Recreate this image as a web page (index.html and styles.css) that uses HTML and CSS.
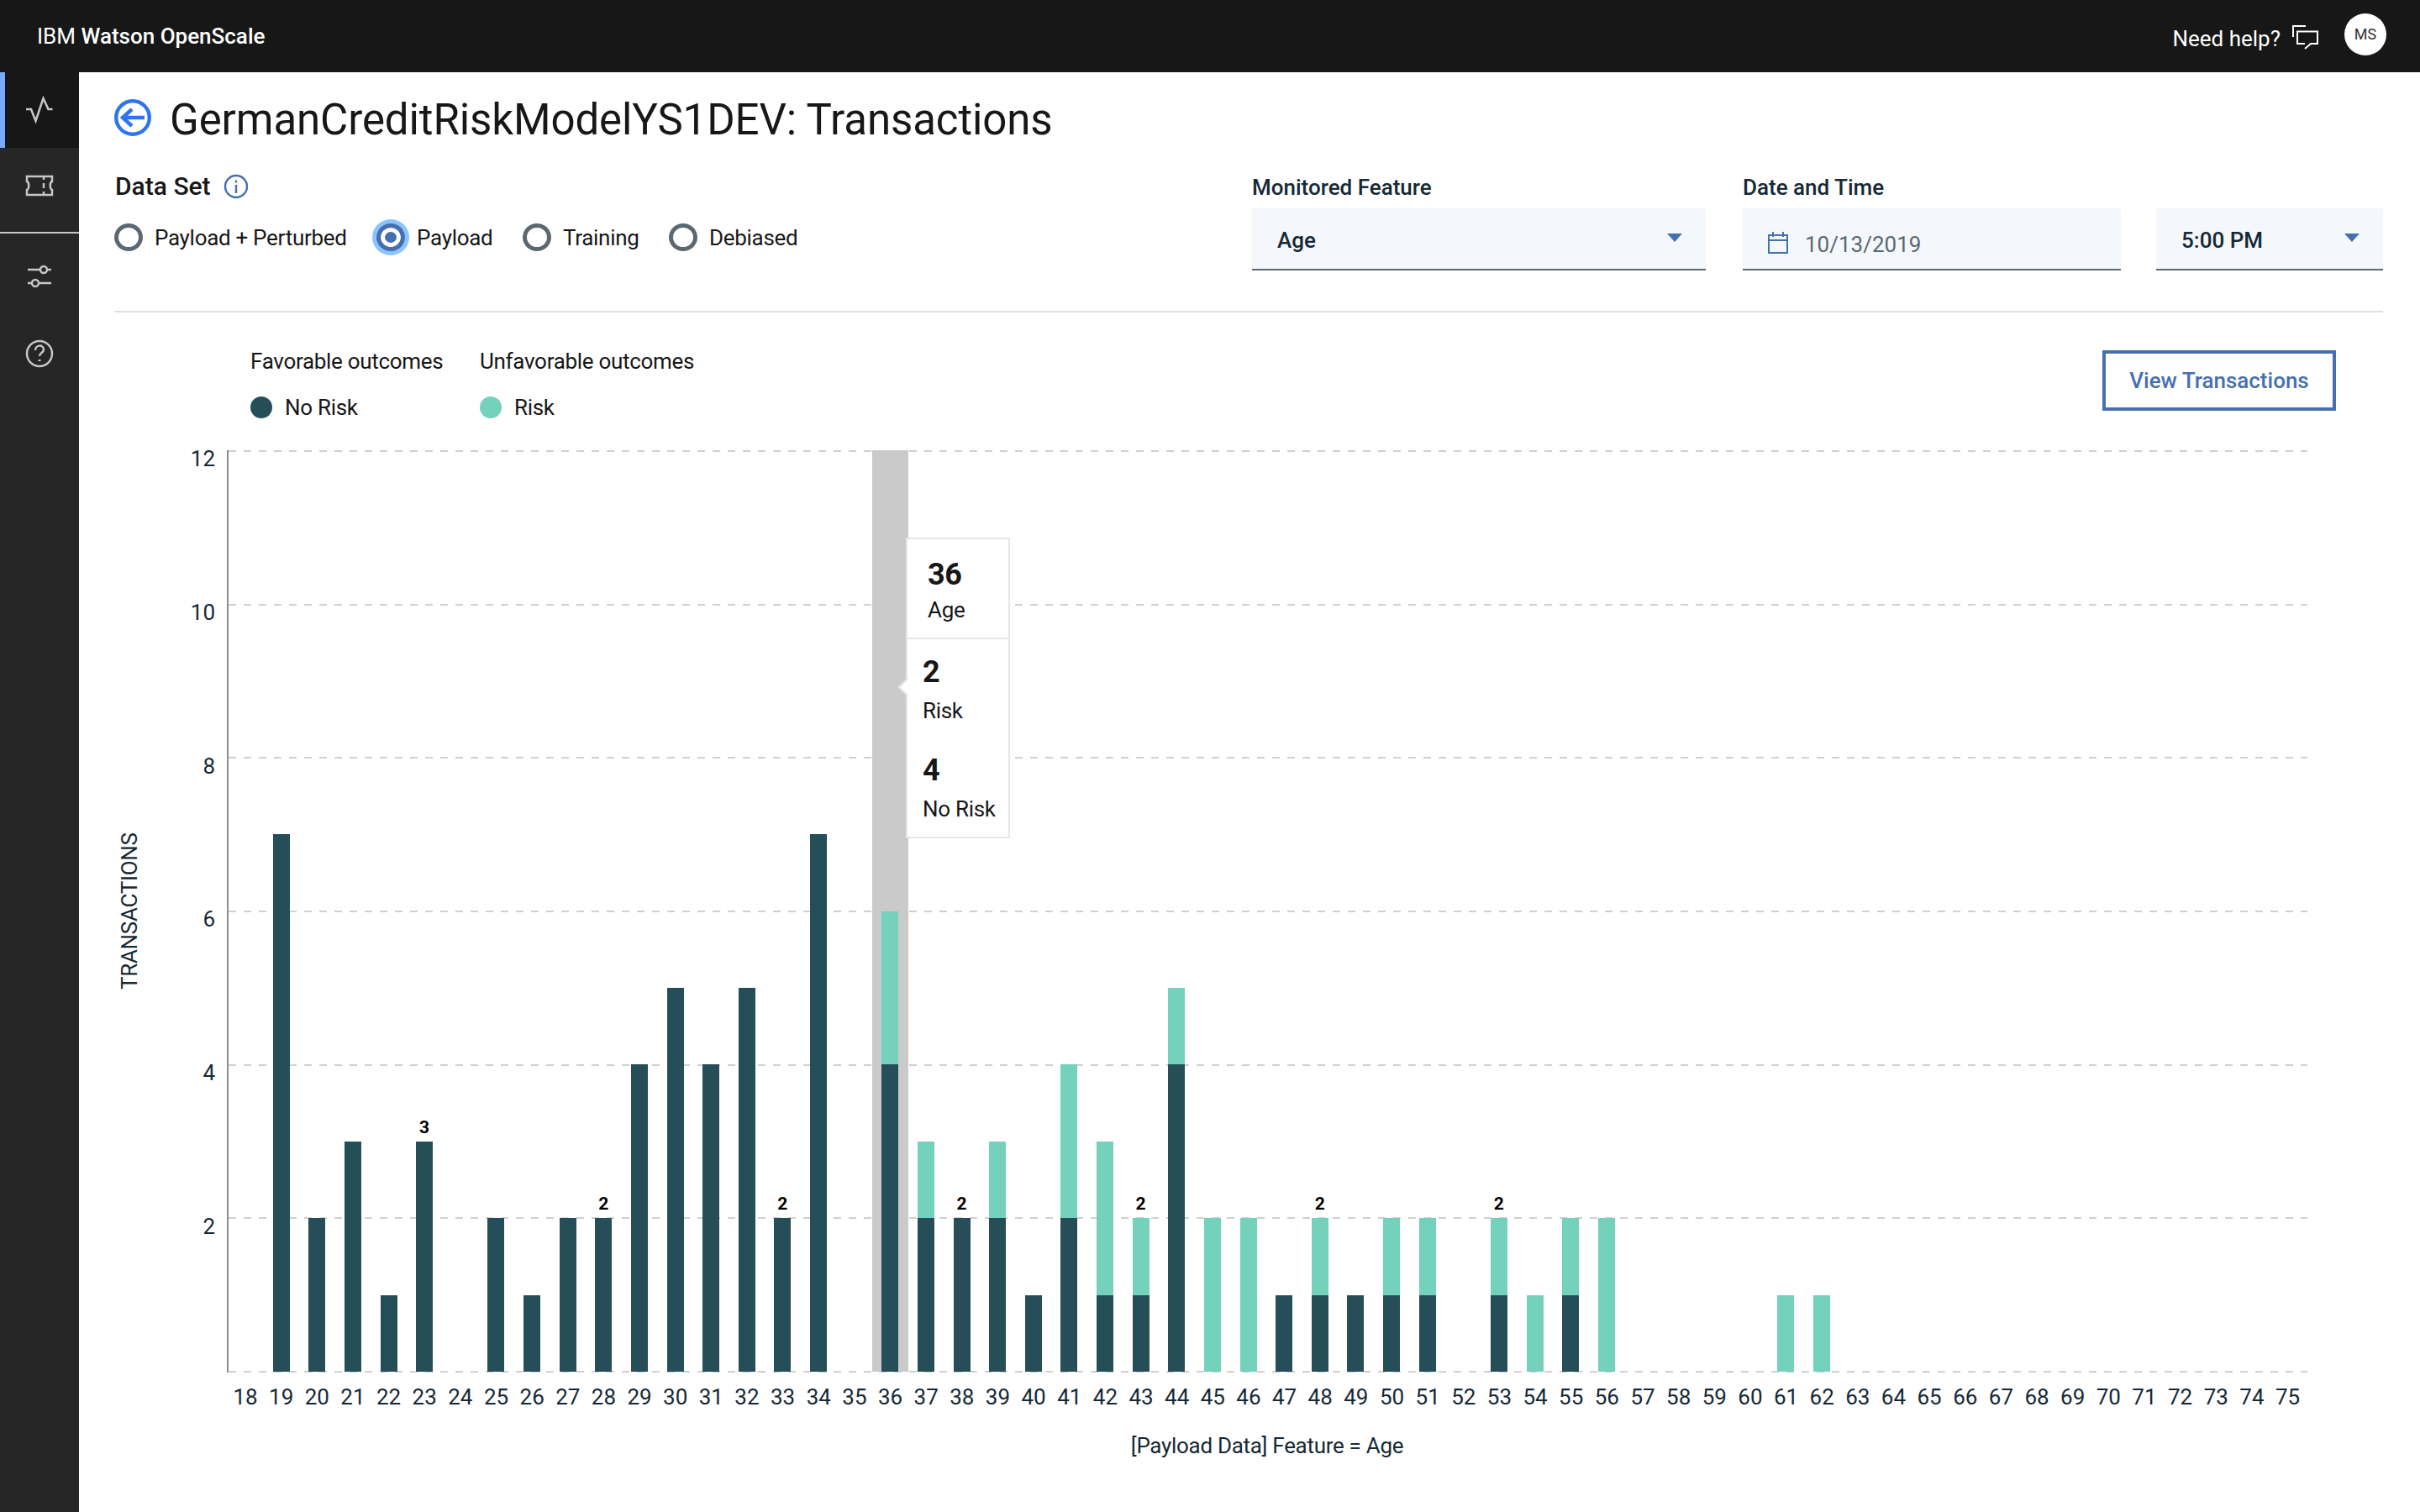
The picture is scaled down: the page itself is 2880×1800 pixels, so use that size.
FILE: index.html
```html
<!DOCTYPE html>
<html lang="en">
<head>
    <meta charset="UTF-8">
    <meta name="viewport" content="width=device-width, initial-scale=1.0">
    <title>IBM Watson OpenScale</title>
    <link rel="stylesheet" href="styles.css">
</head>
<body>
    <header class="topbar">
        <div class="brand">IBM <b>Watson OpenScale</b></div>
        <div class="help">
            <span class="help-text">Need help?</span>
            <svg class="help-icon" viewBox="0 0 32 30"><path d="M1 14V1h15M6 21V7.500h24V22h-8l-7 6"/><path d="M6 21v1h9"/></svg>
            <span class="avatar">MS</span>
        </div>
    </header>

    <div class="page">
        <nav class="sidenav">
            <a class="nav-item active"><svg viewBox="0 0 34 32"><path d="M1 15h6l5.500 14 9-27 6 13h5"/></svg></a>
            <a class="nav-item"><svg viewBox="0 0 34 32"><path d="M2 5h30v6c-3 1-3 9 0 10v6H2v-6c3-1 3-9 0-10z"/><path d="M22 5v4M22 13v6M22 23v4"/></svg></a>
            <hr class="nav-line">
            <a class="nav-item"><svg viewBox="0 0 34 32"><path d="M3 8h15M26 8h5M3 24h5M16 24h15"/><circle cx="22" cy="8" r="4"/><circle cx="12" cy="24" r="4"/></svg></a>
            <a class="nav-item"><svg viewBox="0 0 34 34"><circle cx="17" cy="17" r="15"/><path d="M12 13c0-7 10-7 10-1 0 4-5 4-5 8"/><path class="dot" d="M17 24v2"/></svg></a>
        </nav>

        <main class="content">
            <div class="title-row">
                <svg class="back" viewBox="0 0 44 44"><circle cx="22" cy="22" r="19.800"/><path d="M36 22H10M21 12L10 22l11 10"/></svg>
                <h1>GermanCreditRiskModelYS1DEV: Transactions</h1>
            </div>

            <div class="controls">
                <div class="dataset">
                    <div class="dataset-head">
                        <span>Data Set</span>
                        <svg class="info" viewBox="0 0 30 30"><circle cx="15" cy="15" r="13"/><path d="M15 13v10"/><path d="M15 7.500v3"/></svg>
                    </div>
                    <div class="radios">
                        <label class="radio"><i></i>Payload + Perturbed</label>
                        <label class="radio checked"><i></i>Payload</label>
                        <label class="radio"><i></i>Training</label>
                        <label class="radio"><i></i>Debiased</label>
                    </div>
                </div>
                <div class="filters">
                    <div class="field feature">
                        <div class="field-label">Monitored Feature</div>
                        <div class="select">Age<i class="caret"></i></div>
                    </div>
                    <div class="field date">
                        <div class="field-label">Date and Time</div>
                        <div class="select date-input">
                            <svg class="cal" viewBox="0 0 26 28"><path d="M2 5h22v21H2zM2 11h22M7 1v6M19 1v6"/></svg>
                            <span>10/13/2019</span>
                        </div>
                    </div>
                    <div class="field time">
                        <div class="select">5:00 PM<i class="caret"></i></div>
                    </div>
                </div>
            </div>

            <section class="chart-section">
                <div class="chart-head">
                    <div class="legend">
                        <div class="legend-group">
                            <div>Favorable outcomes</div>
                            <div class="legend-item"><i class="no-risk"></i>No Risk</div>
                        </div>
                        <div class="legend-group">
                            <div>Unfavorable outcomes</div>
                            <div class="legend-item"><i class="risk"></i>Risk</div>
                        </div>
                    </div>
                    <button class="view-btn">View Transactions</button>
                </div>

                <div class="chart-row">
                    <div class="y-title">TRANSACTIONS</div>
                    <div class="y-ticks">
                        <span>12</span><span>10</span><span>8</span><span>6</span><span>4</span><span>2</span>
                    </div>
                    <div class="plot">
                        <div class="gridlines">
                            <i></i><i></i><i></i><i></i><i></i><i></i><i></i>
                        </div>
                        <div class="cols">
                            <div class="col"></div>
                            <div class="col"><u class="bar no-risk v7"></u></div>
                            <div class="col"><u class="bar no-risk v2"></u></div>
                            <div class="col"><u class="bar no-risk v3"></u></div>
                            <div class="col"><u class="bar no-risk v1"></u></div>
                            <div class="col"><b class="total">3</b><u class="bar no-risk v3"></u></div>
                            <div class="col"></div>
                            <div class="col"><u class="bar no-risk v2"></u></div>
                            <div class="col"><u class="bar no-risk v1"></u></div>
                            <div class="col"><u class="bar no-risk v2"></u></div>
                            <div class="col"><b class="total">2</b><u class="bar no-risk v2"></u></div>
                            <div class="col"><u class="bar no-risk v4"></u></div>
                            <div class="col"><u class="bar no-risk v5"></u></div>
                            <div class="col"><u class="bar no-risk v4"></u></div>
                            <div class="col"><u class="bar no-risk v5"></u></div>
                            <div class="col"><b class="total">2</b><u class="bar no-risk v2"></u></div>
                            <div class="col"><u class="bar no-risk v7"></u></div>
                            <div class="col"></div>
                            <div class="col hover"><u class="bar risk v2"></u><u class="bar no-risk v4"></u></div>
                            <div class="col"><u class="bar risk v1"></u><u class="bar no-risk v2"></u></div>
                            <div class="col"><b class="total">2</b><u class="bar no-risk v2"></u></div>
                            <div class="col"><u class="bar risk v1"></u><u class="bar no-risk v2"></u></div>
                            <div class="col"><u class="bar no-risk v1"></u></div>
                            <div class="col"><u class="bar risk v2"></u><u class="bar no-risk v2"></u></div>
                            <div class="col"><u class="bar risk v2"></u><u class="bar no-risk v1"></u></div>
                            <div class="col"><b class="total">2</b><u class="bar risk v1"></u><u class="bar no-risk v1"></u></div>
                            <div class="col"><u class="bar risk v1"></u><u class="bar no-risk v4"></u></div>
                            <div class="col"><u class="bar risk v2"></u></div>
                            <div class="col"><u class="bar risk v2"></u></div>
                            <div class="col"><u class="bar no-risk v1"></u></div>
                            <div class="col"><b class="total">2</b><u class="bar risk v1"></u><u class="bar no-risk v1"></u></div>
                            <div class="col"><u class="bar no-risk v1"></u></div>
                            <div class="col"><u class="bar risk v1"></u><u class="bar no-risk v1"></u></div>
                            <div class="col"><u class="bar risk v1"></u><u class="bar no-risk v1"></u></div>
                            <div class="col"></div>
                            <div class="col"><b class="total">2</b><u class="bar risk v1"></u><u class="bar no-risk v1"></u></div>
                            <div class="col"><u class="bar risk v1"></u></div>
                            <div class="col"><u class="bar risk v1"></u><u class="bar no-risk v1"></u></div>
                            <div class="col"><u class="bar risk v2"></u></div>
                            <div class="col"></div><div class="col"></div><div class="col"></div><div class="col"></div>
                            <div class="col"><u class="bar risk v1"></u></div>
                            <div class="col"><u class="bar risk v1"></u></div>
                        </div>
                        <div class="tooltip">
                            <div class="tip-head"><strong>36</strong><span>Age</span></div>
                            <div class="tip-body">
                                <strong>2</strong><span>Risk</span>
                                <strong class="tip-second">4</strong><span>No Risk</span>
                            </div>
                        </div>
                    </div>
                </div>

                <div class="x-ticks">
                    <span>18</span><span>19</span><span>20</span><span>21</span><span>22</span><span>23</span><span>24</span><span>25</span><span>26</span><span>27</span>
                    <span>28</span><span>29</span><span>30</span><span>31</span><span>32</span><span>33</span><span>34</span><span>35</span><span>36</span><span>37</span>
                    <span>38</span><span>39</span><span>40</span><span>41</span><span>42</span><span>43</span><span>44</span><span>45</span><span>46</span><span>47</span>
                    <span>48</span><span>49</span><span>50</span><span>51</span><span>52</span><span>53</span><span>54</span><span>55</span><span>56</span><span>57</span>
                    <span>58</span><span>59</span><span>60</span><span>61</span><span>62</span><span>63</span><span>64</span><span>65</span><span>66</span><span>67</span>
                    <span>68</span><span>69</span><span>70</span><span>71</span><span>72</span><span>73</span><span>74</span><span>75</span>
                </div>
                <div class="x-title">[Payload Data] Feature = Age</div>
            </section>
        </main>
    </div>
</body>
</html>
```

FILE: styles.css
```css
*{
    box-sizing: border-box;
}
html, body{
    margin: 0;
    height: 100%;
}
body{
    font-family: Roboto, "Noto Sans", sans-serif;
    font-size: 26px;
    line-height: 30px;
    color: #171717;
    background: #fff;
    overflow: hidden;
}

/* top bar */
.topbar{
    height: 86px;
    background: #171717;
    color: #fff;
    display: flex;
    align-items: center;
    justify-content: space-between;
    padding: 0 40px 0 44px;
}
.brand{
    font-size: 26px;
    margin-top: -1px;
}
.brand b{
    font-weight: 500;
}
.help{
    display: flex;
    align-items: center;
}
.help-text{
    margin-top: 6px;
}
.help-icon{
    width: 32px;
    height: 30px;
    margin-top: 3px;
    margin-left: 14px;
    margin-right: 30px;
    fill: none;
    stroke: #fff;
    stroke-width: 2;
}
.avatar{
    width: 50px;
    height: 50px;
    border-radius: 50%;
    background: #fff;
    color: #333;
    font-size: 18px;
    text-align: center;
    line-height: 50px;
    margin-top: -4px;
}

.page{
    display: flex;
    height: 1714px;
}

/* left nav */
.sidenav{
    width: 94px;
    background: #262626;
    flex: none;
}
.nav-item{
    display: flex;
    align-items: center;
    justify-content: center;
    height: 90px;
}
.nav-item.active{
    background: #171717;
    border-left: 6px solid #78a9ff;
    padding-right: 6px;
}
.nav-item svg{
    width: 34px;
    height: 34px;
    fill: none;
    stroke: #c6c6c6;
    stroke-width: 2.500;
}
.nav-item .dot{
    stroke-width: 3;
}
.nav-line{
    border: 0;
    height: 2px;
    background: #c6c6c6;
    margin: 10px 0 6px;
}
.nav-line + .nav-item{
    margin-bottom: 2px;
}

/* main */
.content{
    flex: 1;
    padding: 32px 44px 0 42px;
}
.title-row{
    display: flex;
    align-items: center;
    height: 44px;
}
.back{
    width: 44px;
    height: 44px;
    margin-right: 22px;
    fill: none;
    stroke: #2f74ee;
    stroke-width: 4.400;
}
h1{
    margin: 0;
    padding-top: 6px;
    font-size: 51px;
    line-height: 60px;
    font-weight: 400;
    letter-spacing: -0.100px;
}

.controls{
    display: flex;
    justify-content: space-between;
    margin-top: 46px;
    padding-bottom: 48px;
    border-bottom: 2px solid #e0e0e0;
}
.dataset-head{
    display: flex;
    align-items: center;
    font-size: 30px;
    font-weight: 500;
    margin-top: -1px;
    padding-left: 1px;
}
.info{
    width: 30px;
    height: 30px;
    margin-left: 15px;
    fill: none;
    stroke: #466fb0;
    stroke-width: 2.400;
}
.radios{
    display: flex;
    gap: 35.500px;
    margin-top: 29px;
    letter-spacing: -0.300px;
}
.radio{
    display: flex;
    align-items: center;
    gap: 14px;
}
.radio i{
    width: 34px;
    height: 33px;
    border: 5px solid #5a6872;
    border-radius: 50%;
}
.radio.checked i{
    border-color: #466fb0;
    background: #466fb0;
    box-shadow: inset 0 0 0 5px #fff, 0 0 0 5px #8cc4ff;
}

.filters{
    display: flex;
}
.field-label{
    font-weight: 500;
    color: #152935;
    height: 30px;
    margin-bottom: 10px;
}
.select{
    height: 74px;
    background: #f4f7fb;
    border-bottom: 2px solid #5a6872;
    display: flex;
    align-items: center;
    justify-content: space-between;
    padding: 4px 28px 0 30px;
    font-weight: 500;
    color: #152935;
}
.feature{
    width: 540px;
    margin-right: 44px;
}
.date{
    width: 450px;
    margin-right: 42px;
}
.time{
    width: 270px;
    padding-top: 40px;
}
.time .select{
    padding-left: 30px;
}
.date-input{
    justify-content: flex-start;
    padding: 14px 0 0 29px;
    font-weight: 400;
    color: #5a6872;
}
.cal{
    width: 26px;
    height: 28px;
    margin-right: 19px;
    margin-top: -4px;
    fill: none;
    stroke: #466fb0;
    stroke-width: 2;
}
.caret{
    width: 0;
    height: 0;
    border-left: 9px solid transparent;
    border-right: 9px solid transparent;
    border-top: 10px solid #466fb0;
    margin-top: -6px;
}

/* chart */
.chart-head{
    display: flex;
    justify-content: space-between;
    align-items: flex-start;
    padding: 43px 56px 0 162px;
}
.legend{
    display: flex;
    letter-spacing: -0.300px;
}
.legend-group{
    width: 273px;
}
.legend-item{
    display: flex;
    align-items: center;
    gap: 15px;
    margin-top: 25px;
}
.legend-item i{
    width: 26px;
    height: 26px;
    border-radius: 50%;
}
.no-risk{
    background: #264e58;
}
.risk{
    background: #74d1bc;
}
.view-btn{
    width: 278px;
    height: 72px;
    margin-top: 2px;
    border: 4px solid #466fb0;
    background: #fff;
    color: #466fb0;
    font-family: inherit;
    font-size: 26px;
    font-weight: 500;
}

.chart-row{
    display: flex;
    margin-top: 36px;
}
.y-title{
    width: 36px;
    margin-left: 3px;
    margin-right: -3px;
    writing-mode: vertical-rl;
    transform: rotate(180deg);
    text-align: center;
    letter-spacing: -0.300px;
    color: #152935;
}
.y-ticks{
    width: 84px;
    margin-top: -5px;
    margin-right: 14px;
    display: grid;
    grid-auto-rows: 182.800px;
    text-align: right;
    color: #152935;
}
.plot{
    position: relative;
    width: 2476px;
    height: 1098px;
    border-left: 2px solid #8c8c8c;
}
.gridlines{
    position: absolute;
    inset: 0 0 0 0;
    display: flex;
    flex-direction: column;
    justify-content: space-between;
}
.gridlines i{
    height: 2px;
    background: repeating-linear-gradient(90deg, #d0d0d0 0 9px, transparent 9px 18px);
}
.cols{
    position: relative;
    display: flex;
    height: 1097px;
    margin-left: -1.300px;
}
.col{
    width: 42.630px;
    flex: none;
    display: flex;
    flex-direction: column;
    justify-content: flex-end;
    align-items: center;
}
.col.hover{
    background: #cacaca;
}
.bar{
    display: block;
    width: 20px;
    text-decoration: none;
}
.v1{ height: 91.400px; }
.v2{ height: 182.800px; }
.v3{ height: 274.200px; }
.v4{ height: 365.600px; }
.v5{ height: 457px; }
.v7{ height: 639.800px; }
.total{
    font-size: 21px;
    line-height: 24px;
    color: #000;
    margin-bottom: 5px;
}

.tooltip{
    position: absolute;
    left: 806px;
    top: 104px;
    width: 124px;
    height: 358px;
    background: #fff;
    border: 2px solid #e3e7ec;
    letter-spacing: -0.300px;
}
.tooltip::before{
    content: "";
    position: absolute;
    left: -8px;
    top: 168px;
    width: 14px;
    height: 14px;
    background: #fff;
    border-left: 2px solid #e3e7ec;
    border-bottom: 2px solid #e3e7ec;
    transform: rotate(45deg);
}
.tooltip strong{
    display: block;
    font-size: 36px;
    line-height: 40px;
    font-weight: 700;
}
.tooltip span{
    display: block;
    line-height: 30px;
}
.tip-head{
    position: relative;
    height: 119px;
    padding: 22px 0 0 24px;
    border-bottom: 2px solid #e3e7ec;
}
.tip-head span{
    margin-top: 7px;
}
.tip-body{
    position: relative;
    padding: 19px 0 0 18px;
}
.tip-body span{
    margin-top: 11px;
}
.tooltip .tip-second{
    margin-top: 36px;
}

.x-ticks{
    display: flex;
    margin: 14px 0 0 134.700px;
    color: #152935;
}
.x-ticks span{
    width: 42.650px;
    flex: none;
    text-align: center;
}
.x-title{
    width: 2476px;
    margin: 28px 0 0 134px;
    text-align: center;
    letter-spacing: -0.300px;
    color: #152935;
}
```
